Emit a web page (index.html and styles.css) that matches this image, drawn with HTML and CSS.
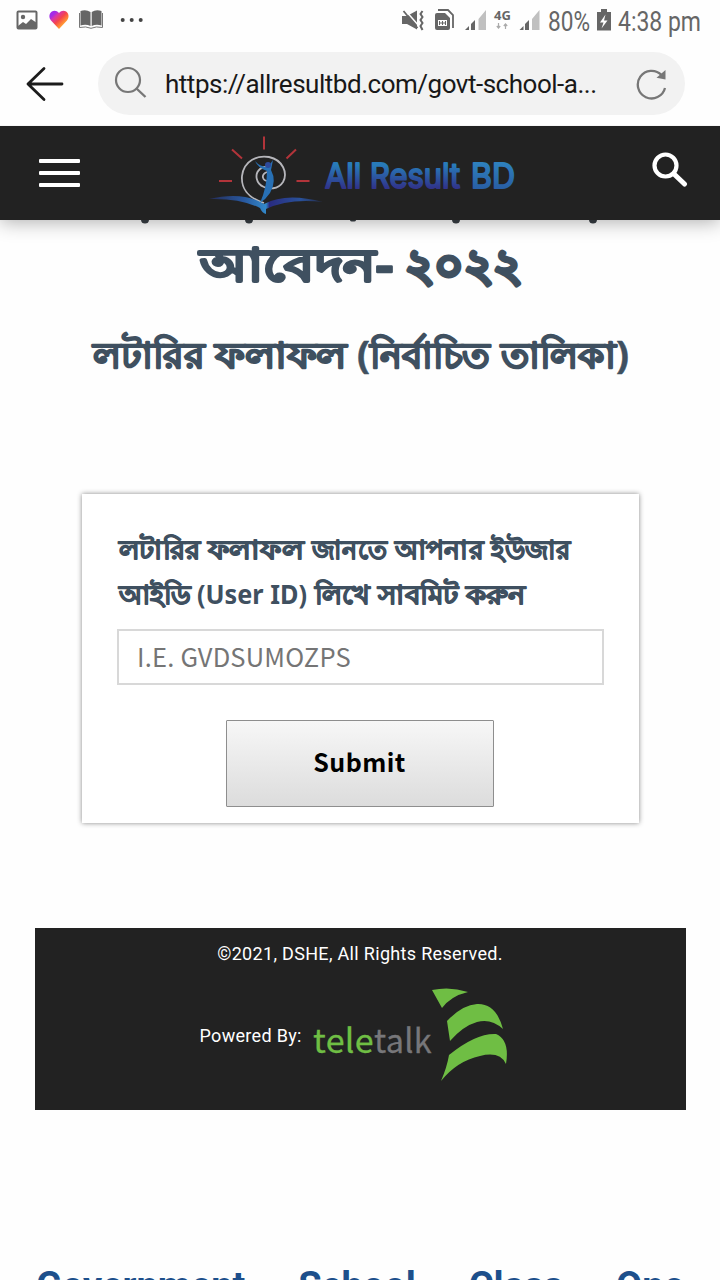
FILE: index.html
```html
<!DOCTYPE html>
<html lang="bn">
<head>
<meta charset="utf-8">
<title>All Result BD</title>
<link rel="stylesheet" href="styles.css">
</head>
<body>
<div class="status">
  <svg class="status-left" width="150" height="40" viewBox="0 0 150 40">
    <defs><linearGradient id="heart" x1="0" y1="0" x2="1" y2="1"><stop offset=".2" stop-color="#a32be8"/><stop offset=".32" stop-color="#d936a8"/><stop offset=".5" stop-color="#f5464b"/><stop offset=".68" stop-color="#ff8a35"/><stop offset=".85" stop-color="#ffc33c"/></linearGradient></defs>
    <rect x="17.500" y="11.500" width="19" height="17" rx="1" fill="none" stroke="#666" stroke-width="2"/>
    <circle cx="23" cy="17" r="2.200" fill="#666"/>
    <path d="M18 26l5-4 3 2 5-5 6 4v6H18z" fill="#666"/>
    <path d="M59 29L51 20.500C46 14 54 7 59 13C64 7 72 14 67 20.500Z" fill="url(#heart)"/>
    <path d="M80.500 11Q86 9 90.500 12V26Q86 24 80.500 25.500ZM91.700 12Q96 9 101.500 11V25.500Q96 24 91.700 26Z" fill="#666"/>
    <path d="M79.500 13V27.500Q86 26 91 28.300Q96 26 102.500 27.500V13" fill="none" stroke="#777" stroke-width="1"/>
    <g fill="#444"><circle cx="122.700" cy="20" r="2"/><circle cx="131.700" cy="20" r="2"/><circle cx="140.700" cy="20" r="2"/></g>
  </svg>
  <svg class="status-right" width="330" height="40" viewBox="390 0 330 40">
    <g fill="#666">
      <path d="M402 16h5l10-5.500v19L407 24h-5z"/>
      <path d="M405 10l14 16" stroke="#fff" stroke-width="1.500"/>
      <path d="M403.500 11l14 17" stroke="#666" stroke-width="1.800"/>
      <path d="M422.500 11l-2 3 2 3-2 3 2 3-2 3 2 4" fill="none" stroke="#666" stroke-width="2"/>
      <path d="M435 15q0-2 2-2h8l5 5v10q0 2-2 2h-11q-2 0-2-2z"/>
      <path d="M438 10h10l5 5v13" fill="none" stroke="#666" stroke-width="1.800"/>
      <path d="M438 20h9v6h-9z" fill="#fff"/>
      <path d="M439.500 21v4M442.500 21v4M445.500 21v4M439.500 23h6" fill="none" stroke="#666" stroke-width="1"/>
      <path d="M465 30h4v-4zM471 30h4V20l-4 4zM519.500 30h4v-4zM525 30h4V20l-4 4z"/>
      <path d="M478.500 30h7.500V10l-7.500 9zM532 30h7.500V10l-7.500 9z" fill="#c0c0c0"/>
      <path d="M597 12h4v-3h6v3h4v18.500h-14z"/>
      <path d="M605.500 14.500l-5.500 8h3.500l-2 6 6-8H604z" fill="#fff"/>
    </g>
    <path d="M498.500 23v5M496.800 26l1.700 2 1.700-2M505.500 29v-5M503.800 26l1.700-2 1.700 2" fill="none" stroke="#aaa" stroke-width="1.200"/>
    <text class="net" x="494" y="19.500" textLength="17">4G</text>
    <text class="clock" x="548" y="30.500" textLength="42" lengthAdjust="spacingAndGlyphs">80%</text>
    <text class="clock" x="618" y="30.500" textLength="83" lengthAdjust="spacingAndGlyphs">4:38 pm</text>
  </svg>
</div>
<div class="browser">
  <svg class="back" width="38" height="36" viewBox="0 0 38 36"><path d="M36 18H2M18 2.500L2 18l16 15.500" fill="none" stroke="#1c1c1c" stroke-width="2.800" stroke-linecap="round" stroke-linejoin="round"/></svg>
  <div class="address">
    <svg width="34" height="34" viewBox="0 0 34 34"><circle cx="14" cy="14" r="12" fill="none" stroke="#777" stroke-width="2.200"/><path d="M22.500 22.500L31.500 31" stroke="#777" stroke-width="2.400"/></svg>
    <span class="url">https://allresultbd.com/govt-school-a...</span>
    <svg width="34" height="34" viewBox="0 0 34 34"><path d="M31 22A13.800 13.800 0 1 1 27.500 9" fill="none" stroke="#777" stroke-width="2.300"/><path d="M31.500 4v9.500l-9-1.800z" fill="#777"/></svg>
  </div>
</div>
<header class="navbar">
  <div class="burger"><i></i><i></i><i></i></div>
  <svg class="brand" width="322" height="94" viewBox="204 126 322 94">
    <defs>
      <linearGradient id="letters" x1="0" y1="0" x2="0" y2="1"><stop offset=".25" stop-color="#287bb9"/><stop offset=".8" stop-color="#30348a"/></linearGradient>
      <linearGradient id="last" x1="0" y1="0" x2="0" y2="1"><stop offset=".2" stop-color="#2e80bd"/><stop offset=".9" stop-color="#285aa1"/></linearGradient>
      <linearGradient id="book"><stop stop-color="#252b55"/><stop offset=".3" stop-color="#28579e"/><stop offset=".5" stop-color="#3288c9"/><stop offset=".53" stop-color="#292b80"/><stop offset=".8" stop-color="#29519a"/><stop offset="1" stop-color="#252b45"/></linearGradient>
    </defs>
    <path d="M264 136.500v13M232 149.500l10 9M296 149.500l-9.500 9M219 181h13M296.500 181h13" stroke="#b2343a" stroke-width="2"/>
    <path d="M264 203C248 198 241 188 242 176C244 160 258 155 269 157C283 160 288 173 283 182C278 190 268 189 264 187M264 187C256 184 254 174 260 169Q265 165 270 169M268 181C263 181 260 175 267 172" fill="none" stroke="#b6b6bb" stroke-width="1.800"/>
    <path d="M255 161Q260 167 268 167L273 160L271 170Q277 181 270 193Q266 199 260 203Q267 187 267 171Q258 168 255 161Z" fill="#2870b4"/>
    <circle cx="268" cy="165" r="3" fill="#2d4a9b"/>
    <path d="M209 199Q243 191 264 204Q286 192 323 202Q289 198 266 209V214Q262 213 260 208Q240 198 209 199Z" fill="url(#book)"/>
    <g class="brand-name">
      <text x="325" y="188" textLength="135" lengthAdjust="spacingAndGlyphs" fill="url(#letters)" stroke="url(#letters)">All Result</text>
      <text x="471" y="188" textLength="44" lengthAdjust="spacingAndGlyphs" fill="url(#last)" stroke="url(#last)">BD</text>
    </g>
  </svg>
  <svg class="search" width="36" height="36" viewBox="0 0 36 36"><circle cx="13.500" cy="13.500" r="11" fill="none" stroke="#fff" stroke-width="4.200"/><path d="M22 22L32.500 32" stroke="#fff" stroke-width="5" stroke-linecap="round"/></svg>
</header>
<main>
  <svg class="descenders" width="720" height="4" viewBox="0 0 720 4"><g fill="#2e3338"><circle cx="145" cy="-.5" r="4"/><circle cx="249" cy="-.5" r="4"/><ellipse cx="353" cy="0" rx="3" ry="1.500"/><circle cx="456" cy="-.5" r="4"/><circle cx="593" cy="-.5" r="4"/></g></svg>
  <h1><svg class="bn bn-xl" width="720" height="66" viewBox="0 234 720 66">
    <text x="200" y="281" textLength="176" lengthAdjust="spacingAndGlyphs">আবেদন</text>
    <text x="376" y="281" textLength="17" lengthAdjust="spacingAndGlyphs">-</text>
    <text class="digits" x="405" y="281" textLength="117" lengthAdjust="spacingAndGlyphs">২০২২</text>
  </svg></h1>
  <h2><svg class="bn bn-lg" width="720" height="56" viewBox="0 328 720 56">
    <text x="93" y="368" textLength="112" lengthAdjust="spacingAndGlyphs">লটারির</text>
    <text x="215" y="368" textLength="132" lengthAdjust="spacingAndGlyphs">ফলাফল</text>
    <text class="paren" x="357" y="368" textLength="13" lengthAdjust="spacingAndGlyphs">(</text>
    <text x="370" y="368" textLength="120" lengthAdjust="spacingAndGlyphs">নির্বাচিত</text>
    <text x="501" y="368" textLength="114" lengthAdjust="spacingAndGlyphs">তালিকা</text>
    <text class="paren" x="616" y="368" textLength="13" lengthAdjust="spacingAndGlyphs">)</text>
  </svg></h2>
  <form class="card">
    <label for="uid"><svg class="bn bn-md" width="487" height="90" viewBox="117 527 487 90">
      <text x="119" y="558.500" textLength="81" lengthAdjust="spacingAndGlyphs">লটারির</text>
      <text x="208" y="558.500" textLength="95" lengthAdjust="spacingAndGlyphs">ফলাফল</text>
      <text x="312" y="558.500" textLength="75" lengthAdjust="spacingAndGlyphs">জানতে</text>
      <text x="395" y="558.500" textLength="88" lengthAdjust="spacingAndGlyphs">আপনার</text>
      <text x="491" y="558.500" textLength="79" lengthAdjust="spacingAndGlyphs">ইউজার</text>
      <text x="119" y="603.500" textLength="72" lengthAdjust="spacingAndGlyphs">আইডি</text>
      <text class="latin" x="197" y="604" textLength="110" lengthAdjust="spacingAndGlyphs">(User ID)</text>
      <text x="315" y="603.500" textLength="55" lengthAdjust="spacingAndGlyphs">লিখে</text>
      <text x="378" y="603.500" textLength="80" lengthAdjust="spacingAndGlyphs">সাবমিট</text>
      <text x="466" y="603.500" textLength="60" lengthAdjust="spacingAndGlyphs">করুন</text>
    </svg></label>
    <input id="uid" type="text" placeholder="I.E. GVDSUMOZPS">
    <button type="button">Submit</button>
  </form>
  <footer>
    <p class="copyright">©2021, DSHE, All Rights Reserved.</p>
    <div class="powered">
      <span>Powered By:</span>
      <svg width="196" height="96" viewBox="313 986 196 96">
        <text class="tele" x="313" y="1052.500" textLength="61" lengthAdjust="spacingAndGlyphs" fill="#6fbe44" stroke="#6fbe44">tele</text>
        <text class="tele" x="374" y="1052.500" textLength="58" lengthAdjust="spacingAndGlyphs" fill="#77777a" stroke="#77777a">talk</text>
        <g fill="#6fbe44"><path d="M432 990Q450 986 468 992Q451 996 442 1008Z"/><path d="M447 1021Q462 1005 477 1004Q496 1003 503 1029Q491 1018 477 1022Q463 1026 450 1041Z"/><path d="M449 1055Q476 1033 496 1034Q510 1040 506 1064Q500 1051 480 1056Q457 1061 441 1081Q447 1067 449 1055Z"/></g>
      </svg>
    </div>
  </footer>
  <div class="next-heading"><span>Government</span><span>School</span><span>Class</span><span>One</span></div>
</main>
</body>
</html>
```
FILE: styles.css
```css
* { box-sizing: border-box; }
body { margin: 0; width: 720px; height: 1280px; overflow: hidden; display: flex; flex-direction: column; background: #fefefe; font-family: Roboto, "Noto Sans", sans-serif; }
svg { display: block; flex: none; }
.status { height: 40px; flex: none; display: flex; justify-content: space-between; }
.clock { font: 27px Roboto, sans-serif; fill: #666; }
.net { font: bold 13px "Noto Sans", sans-serif; fill: #666; }
.browser { height: 86px; flex: none; display: flex; align-items: center; padding: 1px 35px 0 26px; border-bottom: 1px solid #f6f6f6; }
.back { margin-top: 1px; }
.address { width: 587px; height: 63px; margin-left: 34px; border-radius: 32px; background: #f2f2f2; display: flex; align-items: center; padding: 0 17px 0 16px; }
.url { flex: 1; margin: 2px 0 0 17px; font-size: 26px; letter-spacing: -0.48px; white-space: nowrap; color: #181818; }
.navbar { position: relative; height: 94px; flex: none; background: #222; display: flex; padding: 0 32px 0 39px; box-shadow: 0 2px 18px rgba(0,0,0,.32); clip-path: inset(0 0 -24px 0); }
.burger { width: 41px; margin-top: 33px; display: flex; flex-direction: column; gap: 8px; }
.burger i { height: 4px; border-radius: 1px; background: #fff; }
.brand { margin-left: 124px; }
.brand-name text { font: 34px Inter, "Open Sans", sans-serif; stroke-width: 2px; stroke-linejoin: round; }
.search { margin: 26px 0 0 126px; }
main { flex: 1; min-height: 0; overflow: hidden; display: flex; flex-direction: column; align-items: center; }
.descenders { position: relative; z-index: 2; }
h1, h2 { margin: 0; flex: none; }
h1 { margin-top: 10px; }
h2 { margin-top: 28px; }
.bn { fill: #3f5060; stroke: #3f5060; stroke-linejoin: round; font-family: "Noto Sans", sans-serif; font-weight: 700; }
.bn-xl { font-size: 45px; stroke-width: 2.4px; }
.bn-xl .digits { stroke-width: 3.6px; }
.bn-lg { font-size: 36px; stroke-width: 1.6px; }
.bn-md { font-size: 26px; stroke-width: 1.1px; }
.bn .latin { stroke: none; }
.bn .paren { font-size: 38px; stroke-width: .5px; }
.card { flex: none; width: 557px; height: 329px; margin: 110px 0 0 1px; padding: 33px 35px 0; display: flex; flex-direction: column; background: #fff; box-shadow: 0 0 5px #888; }
.card label { height: 90px; }
.card input { width: 487px; height: 56px; margin-top: 12px; padding: 0 18px 4px; border: 2px solid #d8d8d8; border-radius: 0; background: #fff; font: 25.5px "Noto Sans CJK SC", sans-serif; letter-spacing: .2px; }
.card input::placeholder { color: #757575; opacity: 1; }
.card button { width: 268px; height: 87px; margin: 35px 0 0 108.500px; padding: 0 0 5px; border: 1px solid #8e8e8e; border-radius: 1px; background: linear-gradient(#f7f7f7, #dcdcdc); color: #000; font: bold 25px "Noto Sans CJK SC", sans-serif; letter-spacing: .4px; }
footer { flex: none; width: 651px; height: 182px; margin-top: 105px; background: #222; color: #fff; letter-spacing: .32px; font-size: 18px; }
.copyright { margin: 0; padding-top: 14px; line-height: 24px; text-align: center; }
.powered { display: flex; align-items: center; margin: 20px 0 0 165px; }
.powered span { width: 113px; margin-top: 3px; white-space: nowrap; }
.tele { font: 33px "Noto Sans CJK SC", sans-serif; stroke-width: .3px; }
.next-heading { flex: none; width: 648px; margin-top: 153px; display: flex; justify-content: space-between; color: #1d4f8b; font: bold 38px/47px Roboto, sans-serif; }
```
